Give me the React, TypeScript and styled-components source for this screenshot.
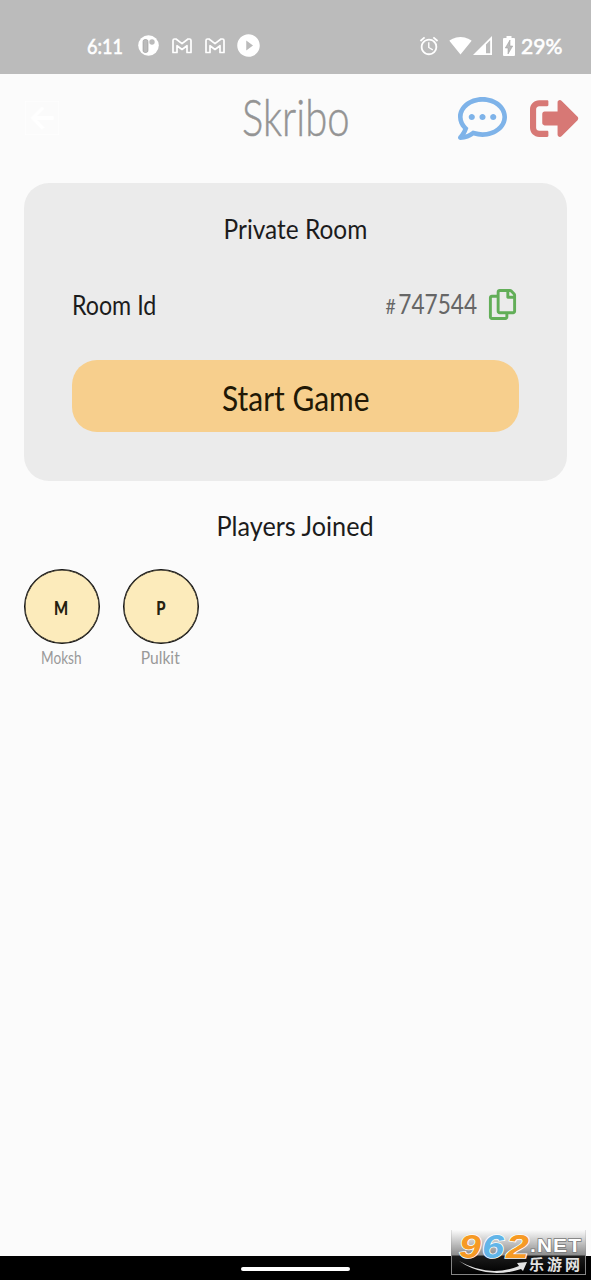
import React from 'react';
import styled, { createGlobalStyle } from 'styled-components';
import { FaRegCommentDots, FaRegCopy, FaSignOutAlt } from 'react-icons/fa';
import { MdAlarm, MdArrowBack, MdPlayCircleFilled, MdSignalWifi4Bar } from 'react-icons/md';

const GlobalStyle = createGlobalStyle`
  * { box-sizing: border-box; }
  body { margin: 0; background: #fbfbfb; font-family: Lato, "Liberation Sans", sans-serif; }
`;

const Screen = styled.div`
  position: relative;
  display: flex;
  flex-direction: column;
  height: 1280px;
  width: 591px;
  overflow: hidden;
  background: #fbfbfb;
  color: #1c1c1c;
`;

const StatusBar = styled.div`
  display: flex;
  justify-content: space-between;
  height: 74px;
  padding: 17px 29px 0 87px;
  background: #bbbbbb;
  color: #fff;
  flex: none;
`;

const StatusGroup = styled.div`
  display: flex;
  align-items: center;
  svg { display: block; flex: none; }
`;

const Gap = styled.span<{ $w: number }>`
  flex: none;
  width: ${(p) => p.$w}px;
`;

const StatusText = styled.span<{ $w: number }>`
  width: ${(p) => p.$w}px;
  font: 400 22px/24px Lato, sans-serif;
  -webkit-text-stroke: 0.6px #fff;
  white-space: nowrap;
`;

const Header = styled.header`
  display: grid;
  grid-template-columns: 1fr 120px 1fr;
  align-items: center;
  height: 88px;
  padding: 0 12px 0 25px;
  flex: none;
  svg { display: block; }
`;

const Actions = styled.div`
  display: flex;
  justify-content: flex-end;
  gap: 23px;
`;

const Hand = styled.span<{ $x?: number; $origin?: string }>`
  display: inline-block;
  white-space: nowrap;
  transform: scaleX(${(p) => p.$x ?? 1});
  transform-origin: ${(p) => p.$origin ?? 'center'};
`;

const Brand = styled.h1`
  display: flex;
  justify-content: center;
  margin: -4px 0 0 -12px;
  font: 300 52px/60px Lato, sans-serif;
  -webkit-text-stroke: 0.5px #949494;
  color: #949494;
`;

const Card = styled.section`
  display: flex;
  flex-direction: column;
  height: 298px;
  margin: 21px 24px 0;
  padding: 28px 48px 0;
  border-radius: 25px;
  background: #ebebeb;
  flex: none;
`;

const Title = styled.h2`
  display: flex;
  justify-content: center;
  margin: 0;
  font: 400 27px/36px Lato, sans-serif;
`;

const RoomRow = styled.div`
  display: flex;
  align-items: center;
  justify-content: space-between;
  height: 36px;
  margin-top: 40px;
  font-size: 27px;
  line-height: 36px;
`;

const RoomCode = styled.div`
  display: flex;
  align-items: center;
  gap: 10px;
  padding-right: 1px;
  color: #666;
  svg { display: block; color: #62ae58; position: relative; top: -1px; }
  small { font-size: 21px; margin-right: 3px; }
`;

const StartButton = styled.button`
  height: 72px;
  margin-top: 37px;
  padding: 3px 0 0;
  border: 0;
  border-radius: 25px;
  background: #f7cf8d;
  color: #211805;
  font: 400 34px/44px Lato, sans-serif;
`;

const PlayersTitle = styled(Title)`
  margin-top: 27px;
`;

const Players = styled.div`
  display: flex;
  gap: 24px;
  padding: 25px 24px 0;
`;

const Player = styled.div`
  display: flex;
  flex-direction: column;
  align-items: center;
  width: 75px;
  font-size: 17px;
  line-height: 24px;
  color: #999;
`;

const Avatar = styled.div`
  display: flex;
  align-items: center;
  justify-content: center;
  width: 76px;
  height: 75px;
  margin-bottom: 2px;
  padding-top: 3px;
  border: 1.5px solid #111;
  border-width: 1.5px;
  border-radius: 50%;
  background: #fcebbb;
  box-shadow: inset 0 0 0 0.5px #111;
  color: #24200f;
  font-size: 19px;
  font-weight: 900;
`;

const NavBar = styled.div`
  display: flex;
  justify-content: center;
  height: 24px;
  margin-top: auto;
  padding-top: 11px;
  background: #000;
  flex: none;
`;

const NavHandle = styled.div`
  width: 109px;
  height: 4px;
  border-radius: 2px;
  background: #fff;
`;

const Watermark = styled.div`
  position: absolute;
  left: 451px;
  top: 1230px;
  width: 135px;
  height: 45px;
  border: 1px solid #858585;
  border-top: 0;
  border-image: linear-gradient(#e6e6e6, #858585 60%) 1;
  background: linear-gradient(#fbfbfb00, #8c8c8c 57%, #1c1c1c 59%, #000 100%);
  svg { display: block; overflow: visible; }
`;

const GmailGlyph = () => (
  <svg width="20" height="16" viewBox="0 0 20 16" fill="none" stroke="#fff" strokeWidth="1.7" strokeLinejoin="round">
    <path d="M1 14.5V2.5Q1 1 2.5 1H4l6 4.7L16 1h1.5Q19 1 19 2.5v12h-4V7.7l-5 3.8-5-3.8v6.8Z" />
  </svg>
);

const ParkingGlyph = () => (
  <svg width="21" height="21" viewBox="0 0 21 21">
    <circle cx="10.5" cy="10.5" r="10.3" fill="#fff" />
    <rect x="5" y="4.5" width="5" height="13" rx="2" fill="#bbb" stroke="#999" strokeWidth=".6" />
    <circle cx="14" cy="7" r="2.7" fill="#bbb" />
  </svg>
);

const SignalGlyph = () => (
  <svg width="19" height="19" viewBox="0 0 19 19">
    <path fillRule="evenodd" fill="#fff" d="M0 19 19 0v19ZM13 8.5V17.3h4.2V4.3Z" />
  </svg>
);

const BatteryGlyph = () => (
  <svg width="12" height="20" viewBox="0 0 12 20">
    <path fill="#fff" d="M3.5 0h5v2H11q1 0 1 1v16q0 1-1 1H1q-1 0-1-1V3q0-1 1-1h2.500Z" />
    <path fill="#bbb" stroke="#999" strokeWidth=".5" d="M7 4 2.300 12H5v6l4.700-8H7Z" />
  </svg>
);

const WatermarkArt = () => (
  <svg width="133" height="44" viewBox="0 0 133 44">
    <g fontFamily="Liberation Sans, sans-serif" fontWeight="700" fontStyle="italic" fontSize="33" stroke="#fff" strokeWidth="1.5" paintOrder="stroke">
      <text x="7" y="28" fill="#f69a25" textLength="22" lengthAdjust="spacingAndGlyphs">9</text>
      <text x="30" y="28" fill="#62b5e8" textLength="22" lengthAdjust="spacingAndGlyphs">6</text>
      <text x="54" y="28" fill="#f69a25" textLength="23" lengthAdjust="spacingAndGlyphs">2</text>
    </g>
    <path d="M7 31Q37 48 67 36l-2-3 10-1-4 9-2-2Q35 50 7 31Z" fill="#e4e4e4" />
    <g fontFamily="Liberation Sans, sans-serif" fontWeight="700" fontSize="19" fill="#fff" stroke="#777" strokeWidth="1.4" paintOrder="stroke">
      <text x="78" y="22" textLength="52" letterSpacing="1" lengthAdjust="spacingAndGlyphs">.NET</text>
    </g>
    <text x="77" y="40" fontFamily="Noto Sans CJK SC, sans-serif" fontWeight="700" fontSize="15" fill="#e2e2e2" textLength="51">乐游网</text>
  </svg>
);

const players = [
  { name: 'Moksh', scale: 0.8 },
  { name: 'Pulkit', scale: 0.92 },
];

export default function App() {
  return (
    <Screen>
      <GlobalStyle />
      <StatusBar>
        <StatusGroup>
          <StatusText $w={51}><Hand $x={0.82} $origin="left">6:11</Hand></StatusText>
          <ParkingGlyph />
          <Gap $w={13} />
          <GmailGlyph />
          <Gap $w={13} />
          <GmailGlyph />
          <Gap $w={10} />
          <MdPlayCircleFilled size={27} />
        </StatusGroup>
        <StatusGroup>
          <MdAlarm size={22} />
          <Gap $w={9} />
          <MdSignalWifi4Bar size={23} />
          <Gap $w={1} />
          <SignalGlyph />
          <Gap $w={11} />
          <BatteryGlyph />
          <Gap $w={6} />
          <StatusText $w={41}><Hand $x={0.96} $origin="left">29%</Hand></StatusText>
        </StatusGroup>
      </StatusBar>
      <Header>
        <MdArrowBack size={34} color="#fff" stroke="#fff" strokeWidth={0.6} />
        <Brand><Hand $x={0.77}>Skribo</Hand></Brand>
        <Actions>
          <FaRegCommentDots size={49} color="#7eb3e9" />
          <FaSignOutAlt size={49} color="#d77875" />
        </Actions>
      </Header>
      <Card>
        <Title><Hand $x={0.905}>Private Room</Hand></Title>
        <RoomRow>
          <Hand $x={0.86} $origin="left">Room Id</Hand>
          <RoomCode>
            <Hand $x={0.84} $origin="right"><small>#</small>747544</Hand>
            <FaRegCopy size={31} />
          </RoomCode>
        </RoomRow>
        <StartButton><Hand $x={0.88}>Start Game</Hand></StartButton>
      </Card>
      <PlayersTitle><Hand $x={0.935}>Players Joined</Hand></PlayersTitle>
      <Players>
        {players.map((p) => (
          <Player key={p.name}>
            <Avatar><Hand $x={0.78}>{p.name[0]}</Hand></Avatar>
            <Hand $x={p.scale}>{p.name}</Hand>
          </Player>
        ))}
      </Players>
      <NavBar><NavHandle /></NavBar>
      <Watermark><WatermarkArt /></Watermark>
    </Screen>
  );
}
